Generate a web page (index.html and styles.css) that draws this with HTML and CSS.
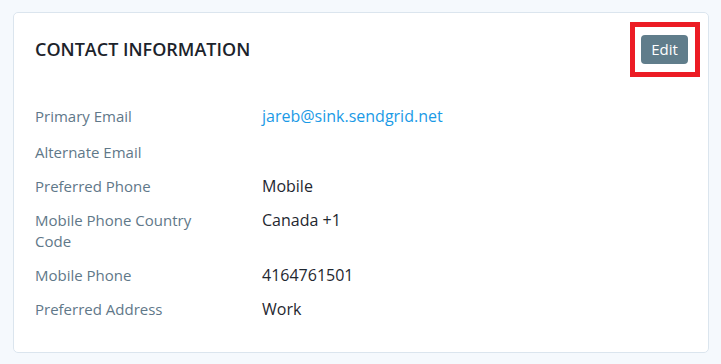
FILE: index.html
```html
<!DOCTYPE html>
<html>
    <head>
        <meta charset="UTF-8">
        <title>Contact Information</title>
        <link rel="stylesheet" href="styles.css">
    </head>
    <body>
        <div class="card">
            <div class="card-head">
                <h2 class="card-title">CONTACT INFORMATION</h2>
                <span class="edit-wrap">
                    <button class="btn-edit">Edit</button>
                    <span class="highlight"></span>
                </span>
            </div>
            <dl class="info">
                <dt class="first">Primary Email</dt>
                <dd class="first"><a href="#">jareb@sink.sendgrid.net</a></dd>
                <dt>Alternate Email</dt>
                <dd></dd>
                <dt>Preferred Phone</dt>
                <dd>Mobile</dd>
                <dt>Mobile Phone Country Code</dt>
                <dd>Canada +1</dd>
                <dt>Mobile Phone</dt>
                <dd>4164761501</dd>
                <dt>Preferred Address</dt>
                <dd>Work</dd>
            </dl>
        </div>
    </body>
</html>
```

FILE: styles.css
```css
html{
    background:#f5f9fd;
}
body{
    margin:12px 12px 11px 13px;
    font-family:"Open Sans", "Liberation Sans", sans-serif;
}
.card{
    background:#fff;
    border:1px solid #dbe5ee;
    border-radius:5px;
    padding:20px 20px 32px 21px;
}
.card-head{
    display:flex;
    align-items:center;
    justify-content:space-between;
    height:32px;
    margin-bottom:41px;
}
.card-title{
    margin:0;
    font-size:18px;
    font-weight:600;
    color:#1c232b;
}
.edit-wrap{
    position:relative;
    display:inline-block;
}
.btn-edit{
    display:block;
    width:47px;
    height:29px;
    border:0;
    border-radius:4px;
    background:#607d8b;
    color:#fff;
    font-family:"Open Sans", "Liberation Sans", sans-serif;
    font-size:15px;
    padding:0;
}
.highlight{
    position:absolute;
    left:-11px;
    right:-12px;
    top:-13px;
    bottom:-13px;
    border:5px solid #ec1c24;
}
.info{
    display:grid;
    grid-template-columns:190px 1fr;
    column-gap:37px;
    row-gap:13px;
    margin:0;
    line-height:21px;
}
.info dt{
    font-size:15px;
    color:#5f7889;
}
.info dd{
    margin:0;
    font-size:16px;
    color:#1f2730;
}
.info .first{
    min-height:23px;
}
.info a{
    color:#1a9ae6;
    text-decoration:none;
}
```
